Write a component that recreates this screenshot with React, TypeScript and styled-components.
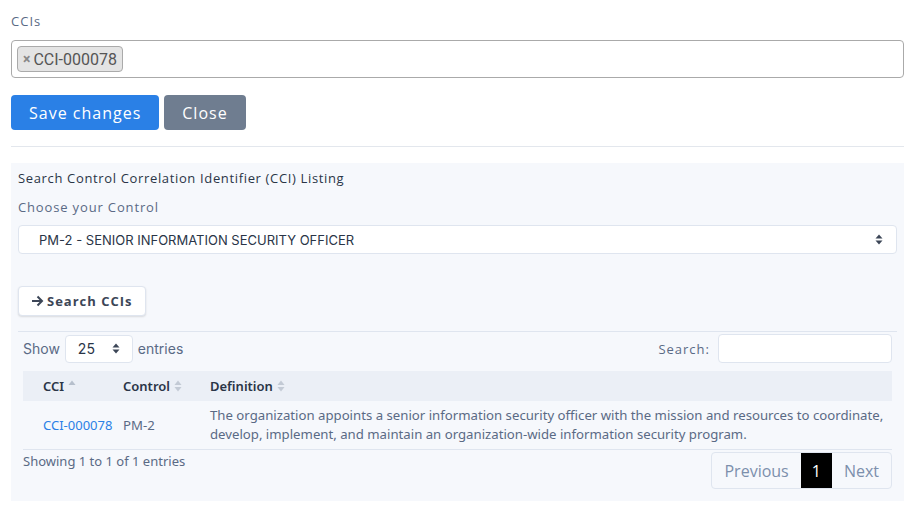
import React from 'react'
import styled, { createGlobalStyle } from 'styled-components'

const GlobalStyle = createGlobalStyle`
  body {
    margin: 0;
    background: #fff;
    font-family: 'Open Sans', 'Liberation Sans', sans-serif;
  }
`

const Page = styled.div`
  width: 915px;
  padding: 12px 11px 0 11px;
  box-sizing: border-box;
`

const FieldLabel = styled.div`
  font-size: 13px;
  letter-spacing: 1px;
  color: #5a6a85;
  line-height: 18px;
  margin-bottom: 10px;
`

const TagInput = styled.div`
  height: 38px;
  box-sizing: border-box;
  border: 1px solid #aaa;
  border-radius: 4px;
  padding: 5px 5px;
  display: flex;
  align-items: center;
`

const Tag = styled.span`
  display: inline-flex;
  align-items: center;
  height: 26px;
  box-sizing: border-box;
  padding: 0 5px;
  background: #e4e4e4;
  border: 1px solid #aaa;
  border-radius: 4px;
  font-family: Roboto, sans-serif;
  font-size: 16px;
  color: #555;
`

const TagRemove = styled.span`
  color: #888;
  font-size: 14px;
  margin-right: 3px;
  font-weight: 700;
`

const Actions = styled.div`
  display: flex;
  gap: 5px;
  margin-top: 17px;
`

const Button = styled.button<{ $variant: 'primary' | 'secondary' }>`
  height: 35px;
  border: none;
  border-radius: 4px;
  padding: 0 18px;
  font-family: 'Open Sans', sans-serif;
  font-size: 16px;
  letter-spacing: 1px;
  font-weight: 500;
  color: #fff;
  background: ${p => (p.$variant === 'primary' ? '#2a80e6' : '#6f7d90')};
`

const Divider = styled.hr`
  border: none;
  border-top: 1px solid #e3e7ed;
  margin: 16px 0 16px 0;
`

const Panel = styled.div`
  background: #f6f8fc;
  padding: 6px 7px 12px 7px;
`

const PanelTitle = styled.div`
  font-size: 13px;
  font-weight: 500;
  letter-spacing: 0.65px;
  color: #2a3547;
  line-height: 18px;
`

const ControlLabel = styled.div`
  font-size: 13px;
  letter-spacing: 0.85px;
  color: #5a6a85;
  margin-top: 11px;
  line-height: 18px;
`

const SelectBox = styled.div`
  margin-top: 9px;
  height: 29px;
  box-sizing: border-box;
  background: #fff;
  border: 1px solid #dfe5ef;
  border-radius: 4px;
  display: flex;
  align-items: center;
  justify-content: space-between;
  padding: 0 13px 0 20px;
  font-family: Inter, sans-serif;
  font-size: 13px;
  color: #2a3547;
`

const SearchButton = styled.button`
  margin-top: 32px;
  height: 30px;
  padding: 0 12px;
  background: #fff;
  border: 1px solid #dfe5ef;
  border-radius: 4px;
  box-shadow: 0 1px 2px rgba(0, 0, 0, 0.12);
  font-family: 'Open Sans', sans-serif;
  font-size: 13px;
  font-weight: 700;
  letter-spacing: 1px;
  color: #3c4657;
  display: flex;
  align-items: center;
  gap: 3px;
`

const TableWrap = styled.div`
  margin-top: 15px;
  border-top: 1px solid #dfe5ef;
  padding: 2px 5px 0 5px;
`

const TableTools = styled.div`
  display: flex;
  justify-content: space-between;
  align-items: center;
  height: 29px;
`

const ToolGroup = styled.div`
  display: flex;
  align-items: center;
  gap: 5px;
  font-size: 13px;
  color: #5a6a85;
`

const InterText = styled.span`
  font-family: Inter, sans-serif;
  font-size: 14px;
`

const SearchLabel = styled.span`
  letter-spacing: 1px;
  margin-right: 3px;
`

const SmallSelect = styled.div`
  width: 68px;
  height: 28px;
  box-sizing: border-box;
  background: #fff;
  border: 1px solid #dfe5ef;
  border-radius: 4px;
  display: flex;
  align-items: center;
  justify-content: space-between;
  padding: 0 12px 0 12px;
  font-family: Inter, sans-serif;
  font-size: 14px;
  color: #2a3547;
`

const SearchInput = styled.input`
  width: 174px;
  height: 29px;
  box-sizing: border-box;
  border: 1px solid #dfe5ef;
  border-radius: 4px;
  background: #fff;
`

const Table = styled.table`
  width: 100%;
  margin-top: 8px;
  border-collapse: collapse;
  font-family: 'Noto Sans', sans-serif;
  font-size: 13.2px;
`

const Th = styled.th<{ $width?: number }>`
  background: #ebeff6;
  height: 30px;
  width: ${p => (p.$width ? `${p.$width}px` : 'auto')};
  text-align: left;
  padding: 0;
  font-size: 13px;
  font-weight: 600;
  color: #2a3547;
  white-space: nowrap;
  &:first-child {
    padding-left: 20px;
  }
`

const Td = styled.td`
  color: #5a6a85;
  padding: 5px 6px 5px 0;
  line-height: 19px;
  border-bottom: 1px solid #dfe5ef;
  vertical-align: middle;
  &:first-child {
    padding-left: 20px;
    font-size: 13px;
  }
`

const Link = styled.a`
  color: #2a80e6;
  text-decoration: none;
`

const Footer = styled.div`
  display: flex;
  justify-content: space-between;
  align-items: flex-start;
  padding-top: 2px;
`

const Info = styled.div`
  font-family: 'Noto Sans', sans-serif;
  font-size: 13px;
  color: #5a6a85;
  line-height: 18px;
`

const Pager = styled.div`
  display: flex;
  border: 1px solid #dfe5ef;
  border-radius: 4px;
  height: 37px;
  box-sizing: border-box;
`

const PageItem = styled.span<{ $active?: boolean }>`
  display: flex;
  align-items: center;
  padding: 0 ${p => (p.$active ? '11px' : '12px')};
  font-family: 'Open Sans', sans-serif;
  font-size: 16px;
  color: ${p => (p.$active ? '#fff' : '#7c8fac')};
  background: ${p => (p.$active ? '#000' : 'transparent')};
`

const SortIcon = ({ up }: { up?: boolean }) => (
  <svg width="8" height="12" viewBox="0 0 8 12" style={{ marginLeft: 4, verticalAlign: -1 }}>
    <path d="M4 0.5 L7.5 5 H0.5 Z" fill={up ? '#b6bfcc' : '#c3cad5'} />
    {!up && <path d="M4 11.5 L7.5 7 H0.5 Z" fill="#c3cad5" />}
  </svg>
)

const UpDown = ({ color = '#3c4657' }: { color?: string }) => (
  <svg width="8" height="11" viewBox="0 0 8 11">
    <path d="M4 0.5 L7.5 4.5 H0.5 Z" fill={color} />
    <path d="M4 10.5 L7.5 6.5 H0.5 Z" fill={color} />
  </svg>
)

export default function App() {
  return (
    <Page>
      <GlobalStyle />
      <FieldLabel>CCIs</FieldLabel>
      <TagInput>
        <Tag>
          <TagRemove>×</TagRemove>CCI-000078
        </Tag>
      </TagInput>
      <Actions>
        <Button $variant="primary">Save changes</Button>
        <Button $variant="secondary">Close</Button>
      </Actions>
      <Divider />
      <Panel>
        <PanelTitle>Search Control Correlation Identifier (CCI) Listing</PanelTitle>
        <ControlLabel>Choose your Control</ControlLabel>
        <SelectBox>
          <span>PM-2 - SENIOR INFORMATION SECURITY OFFICER</span>
          <UpDown />
        </SelectBox>
        <SearchButton>
          <svg width="13" height="12" viewBox="0 0 13 12">
            <path d="M1 6 H11 M6.5 1.5 L11 6 L6.5 10.5" stroke="#3c4657" strokeWidth="2" fill="none" />
          </svg>
          Search CCIs
        </SearchButton>
        <TableWrap>
          <TableTools>
            <ToolGroup>
              <InterText>Show</InterText>
              <SmallSelect>
                <span>25</span>
                <UpDown />
              </SmallSelect>
              <InterText>entries</InterText>
            </ToolGroup>
            <ToolGroup>
              <SearchLabel>Search:</SearchLabel>
              <SearchInput />
            </ToolGroup>
          </TableTools>
          <Table>
            <thead>
              <tr>
                <Th $width={80}>
                  CCI
                  <SortIcon up />
                </Th>
                <Th $width={87}>
                  Control
                  <SortIcon />
                </Th>
                <Th>
                  Definition
                  <SortIcon />
                </Th>
              </tr>
            </thead>
            <tbody>
              <tr>
                <Td>
                  <Link href="#">CCI-000078</Link>
                </Td>
                <Td>PM-2</Td>
                <Td>
                  The organization appoints a senior information security officer with the mission and resources to
                  coordinate, develop, implement, and maintain an organization-wide information security program.
                </Td>
              </tr>
            </tbody>
          </Table>
          <Footer>
            <Info>Showing 1 to 1 of 1 entries</Info>
            <Pager>
              <PageItem>Previous</PageItem>
              <PageItem $active>1</PageItem>
              <PageItem>Next</PageItem>
            </Pager>
          </Footer>
        </TableWrap>
      </Panel>
    </Page>
  )
}
